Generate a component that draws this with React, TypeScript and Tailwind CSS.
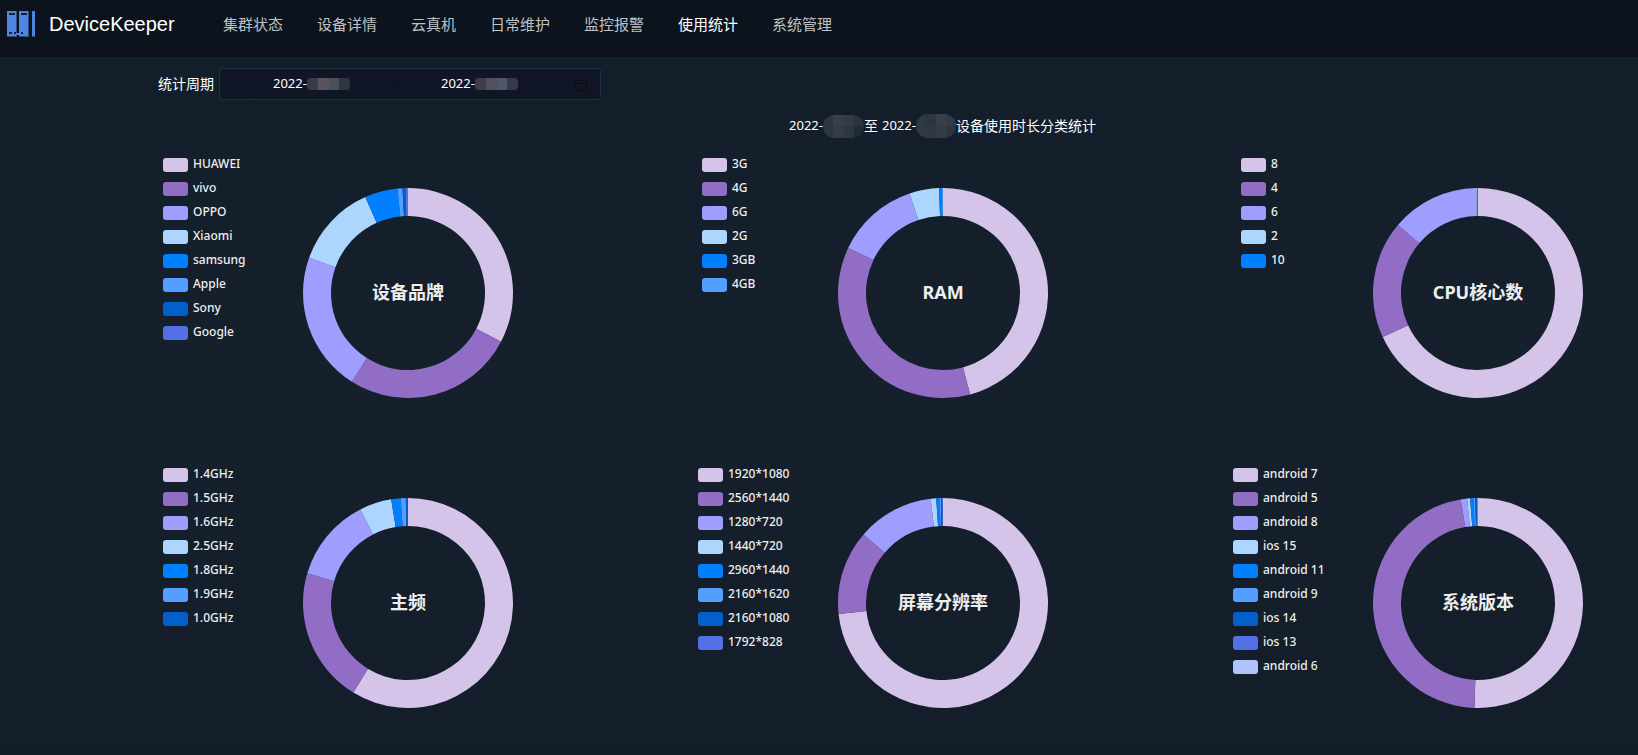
import React, { useState } from "react";

const COLORS = [
  "#d4c4ea",
  "#926dc6",
  "#9e9eff",
  "#add6ff",
  "#0080ff",
  "#539fff",
  "#0360cb",
  "#5470e6",
  "#afc4fb",
];

const NAV = ["集群状态", "设备详情", "云真机", "日常维护", "监控报警", "使用统计", "系统管理"];

type Chart = {
  title: string;
  pad: string;
  // [name, end angle in degrees, clockwise from the top]
  items: [string, number][];
};

const CHARTS: Chart[] = [
  {
    title: "设备品牌",
    pad: "pl-[5px]",
    items: [
      ["HUAWEI", 117.6],
      ["vivo", 212.3],
      ["OPPO", 289.6],
      ["Xiaomi", 336],
      ["samsung", 354.2],
      ["Apple", 357],
      ["Sony", 358.6],
      ["Google", 360],
    ],
  },
  {
    title: "RAM",
    pad: "pl-[9px]",
    items: [
      ["3G", 165],
      ["4G", 295.4],
      ["6G", 341.4],
      ["2G", 357.8],
      ["3GB", 359.5],
      ["4GB", 360],
    ],
  },
  {
    title: "CPU核心数",
    pad: "pl-[13px]",
    items: [
      ["8", 245.2],
      ["4", 310.3],
      ["6", 359],
      ["2", 359.6],
      ["10", 360],
    ],
  },
  {
    title: "主频",
    pad: "pl-[5px]",
    items: [
      ["1.4GHz", 211.4],
      ["1.5GHz", 286.4],
      ["1.6GHz", 333],
      ["2.5GHz", 350.8],
      ["1.8GHz", 356],
      ["1.9GHz", 358.8],
      ["1.0GHz", 360],
    ],
  },
  {
    title: "屏幕分辨率",
    pad: "pl-[5px]",
    items: [
      ["1920*1080", 264],
      ["2560*1440", 310.8],
      ["1280*720", 353.2],
      ["1440*720", 356.3],
      ["2960*1440", 358.1],
      ["2160*1620", 358.9],
      ["2160*1080", 359.5],
      ["1792*828", 360],
    ],
  },
  {
    title: "系统版本",
    pad: "pl-[5px]",
    items: [
      ["android 7", 182],
      ["android 5", 350.5],
      ["android 8", 354],
      ["ios 15", 355.7],
      ["android 11", 357.5],
      ["android 9", 358.5],
      ["ios 14", 359.3],
      ["ios 13", 359.7],
      ["android 6", 360],
    ],
  },
];

const point = (deg: number, r: number) => {
  const a = (deg * Math.PI) / 180;
  return `${105 + r * Math.sin(a)} ${105 - r * Math.cos(a)}`;
};

const arc = (from: number, to: number) => {
  const large = to - from > 180 ? 1 : 0;
  return `M${point(from, 105)} A105 105 0 ${large} 1 ${point(to, 105)} L${point(to, 77)} A77 77 0 ${large} 0 ${point(from, 77)}Z`;
};

const DonutChart: React.FC<{ chart: Chart }> = ({ chart }) => (
  <section className="flex justify-between">
    <ul className={`flex flex-col gap-[10px] ${chart.pad}`}>
      {chart.items.map(([name], i) => (
        <li key={name} className="flex h-[14px] items-center gap-[5px]">
          <span className="h-[14px] w-[25px] rounded-[3px]" style={{ background: COLORS[i] }} />
          <span className="-mt-0.5 font-['Noto_Sans'] text-[12px] leading-[14px] font-medium text-[#eee]">{name}</span>
        </li>
      ))}
    </ul>
    <div className="mt-[30px] grid size-[210px] place-items-center">
      <svg viewBox="0 0 210 210" className="col-start-1 row-start-1 size-[210px]">
        {chart.items.map(([name, end], i) => (
          <path key={name} d={arc(i ? chart.items[i - 1][1] : 0, end)} fill={COLORS[i]} />
        ))}
      </svg>
      <h2 className="col-start-1 row-start-1 -mt-0.5 font-['Noto_Sans','Noto_Sans_CJK_SC',sans-serif] text-[18px] leading-6 font-bold text-[#eee]">
        {chart.title}
      </h2>
    </div>
  </section>
);

const Logo = () => (
  <svg width="28" height="26" viewBox="0 0 28 26" fill="#4c86df">
    <path d="M0 0h9v25H0zM12 0h9v25h-9zM25 0h3v25h-3z" />
    <path d="M9 0h1v25H9zM21 0h1v25h-1zM0 25h10v1H0zM12 25h10v1H12zM25 25h3v1h-3z" fill="#2d4f86" />
    <path d="M9 22h3v2H9z" />
    <path d="M2 2h6v2H2zM14 2h6v2h-6zM2 21h3v2H2zM7 21h2v2H7zM14 21h2v2h-2z" fill="#14233f" />
  </svg>
);

const Mosaic: React.FC<{ colors: string[]; className: string }> = ({ colors, className }) => (
  <span className={`grid auto-rows-fr grid-cols-4 overflow-hidden ${className}`}>
    {colors.map((c, i) => (
      <i key={i} style={{ background: c }} />
    ))}
  </span>
);

const App: React.FC = () => {
  const [start, setStart] = useState("2022-");
  const [end, setEnd] = useState("2022-");

  return (
    <div className="min-h-screen bg-linear-to-b from-[#121e29] via-[#15202c] to-[#131e2a] font-['Liberation_Sans','Noto_Sans_CJK_SC',sans-serif] text-white">
      <header className="flex h-[57px] items-start bg-[#0d131c] pl-[7px]">
        <div className="flex h-12 items-center gap-[14px]">
          <Logo />
          <h1 className="w-[130px] text-[20px]">DeviceKeeper</h1>
        </div>
        <nav className="ml-11 flex h-[50px] items-center gap-[34px] text-[15px] whitespace-nowrap">
          {NAV.map((name) => (
            <a key={name} href="#" className={name === "使用统计" ? "text-white" : "text-[#bfc2c5]"}>
              {name}
            </a>
          ))}
        </nav>
      </header>

      <main className="pt-[11px] pr-[55px] pb-8 pl-[158px] text-[14px]">
        <div className="flex items-center gap-[5px]">
          <label htmlFor="start" className="whitespace-nowrap">统计周期</label>
          <div className="flex h-8 w-[382px] items-center rounded-[3px] border border-[#1e2f39] bg-[#111627] pr-[13px] pl-[53px] font-['Noto_Sans',sans-serif] text-[13px]">
            <input id="start" value={start} onChange={(e) => setStart(e.target.value)} className="w-[34px] outline-none" />
            <Mosaic colors={["#383a4d", "#57535f", "#495059", "#2f3643"]} className="h-3 w-[43px] rounded-[4px]" />
            <span className="w-[91px] pl-10 text-[#080b12]">~</span>
            <input aria-label="end" value={end} onChange={(e) => setEnd(e.target.value)} className="w-[34px] outline-none" />
            <Mosaic colors={["#3b3d4e", "#534f5d", "#4e586a", "#383a48"]} className="h-3 w-[43px] rounded-[4px]" />
            <svg className="ml-auto" width="13" height="13" viewBox="0 0 13 13" fill="none" stroke="#0a0d18">
              <path d="M.5 2.500h12v10H.5zM.5 5.500h12M3.500 0v3M9.500 0v3" />
            </svg>
          </div>
        </div>

        <div className="mt-[14px] flex h-6 items-center justify-center pl-36 whitespace-nowrap">
          <span className="font-['Noto_Sans'] text-[13px]">2022-</span>
          <Mosaic
            colors={["#2c3641", "#373f49", "#333c46", "#2b343f", "#2d3742", "#333b45", "#2e3741", "#202b38"]}
            className="h-[23px] w-[41px] rounded-full"
          />
          <span>至</span>
          <span className="pl-1 font-['Noto_Sans'] text-[13px]">2022-</span>
          <Mosaic
            colors={["#2f3844", "#2c3541", "#37404a", "#343b46", "#303945", "#2f3843", "#323b46", "#2c3540"]}
            className="h-6 w-[40px] rounded-full"
          />
          <span>设备使用时长分类统计</span>
        </div>

        <div className="mt-5 grid grid-cols-[repeat(3,355px)] justify-between gap-y-[70px]">
          {CHARTS.map((chart) => (
            <DonutChart key={chart.title} chart={chart} />
          ))}
        </div>
      </main>
    </div>
  );
};

export default App;
